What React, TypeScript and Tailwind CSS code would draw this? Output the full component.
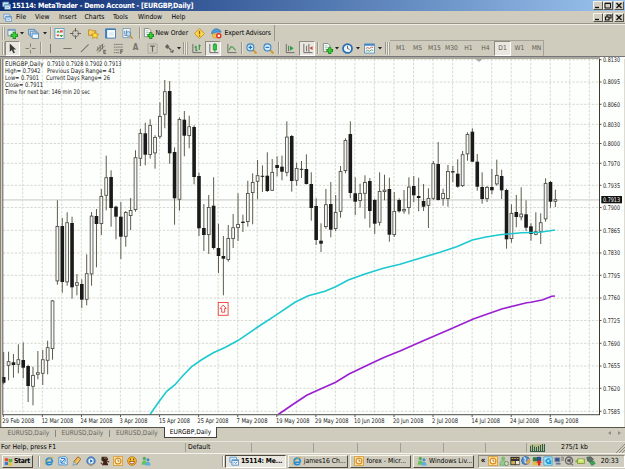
import type { ReactNode } from "react";
import clsx from "clsx";

// [high, body top, body bottom, low, filled]
type Candle = [number, number, number, number, 0 | 1];

const CANDLES: Candle[] = [
  [352, 377, 382.7, 384.3, 1], [351.7, 361.3, 365.7, 380.3, 0], [354, 362.3, 365, 377.7, 1],
  [344.3, 359.3, 364.7, 373.3, 0], [342.3, 360, 367.7, 378.3, 1], [364.7, 366, 386, 402, 1],
  [366.7, 375, 386.7, 405.3, 0], [351, 372.3, 374.7, 379.3, 0], [350, 359.3, 373.7, 385, 0],
  [340.7, 347.3, 360.7, 374.3, 0], [300, 300.5, 349, 359.7, 0], [200.3, 226, 281.3, 284.7, 0],
  [218, 226, 282, 292.7, 1], [212.3, 222.3, 282.3, 285.7, 0], [216.7, 223, 287.3, 298.7, 1],
  [274, 282.3, 285.7, 295.3, 0], [279.3, 284, 299.7, 308, 1], [254.3, 273.3, 299.7, 305.3, 0],
  [212, 215.7, 274.3, 285.7, 0], [209, 216, 224, 267.3, 1], [189, 196, 224, 235, 0],
  [155.7, 177.3, 195.7, 210.3, 0], [170.3, 177, 208, 226.7, 1], [205.7, 206.7, 216.7, 239.3, 1],
  [202, 216.7, 236.7, 259, 1], [211, 212, 236.7, 246.7, 0], [198, 210, 216, 230, 0],
  [150.3, 157.3, 210, 211.7, 0], [128.7, 133, 158.7, 166, 0], [122.7, 133.3, 154.7, 165.3, 1],
  [119.3, 125, 155, 158.7, 0], [135.3, 137, 153.3, 168.7, 0], [102.3, 116, 136.7, 138.7, 0],
  [80, 91.3, 114.7, 128.3, 0], [81, 91, 153.3, 163.7, 1], [147.3, 152, 198.3, 224.7, 1],
  [117.3, 119, 199.7, 210.7, 0], [111, 119.7, 135.7, 156.3, 1], [115.7, 126.3, 136, 148.3, 0],
  [125.3, 127, 177, 184.3, 1], [172.7, 176, 228.3, 236, 1], [204, 228, 235, 251, 1],
  [195, 207, 235, 254, 0], [177.3, 205.7, 248, 249.5, 1], [223.7, 248, 256, 273, 1],
  [236, 256, 258.7, 295.3, 1], [225, 238, 260, 261.7, 0], [214, 227.3, 239, 248, 0],
  [193.3, 224, 228, 241, 0], [214.7, 221.7, 223, 232, 1], [180.7, 193, 222, 226.7, 0],
  [173.3, 182, 193, 224.3, 0], [160, 175.3, 181.7, 199.3, 0], [165.3, 175.8, 176.8, 192, 1],
  [152.3, 175.7, 191, 192, 1], [159, 172, 190.7, 191, 0], [156.3, 165, 168, 176.3, 1],
  [155.7, 166.7, 171.7, 180.3, 1], [121.3, 136.7, 172.7, 176.3, 0], [135, 136, 181, 191.7, 1],
  [162.7, 168, 180.7, 185.7, 0], [161, 168.8, 169.8, 178, 1], [154.3, 169, 184, 184.5, 1],
  [172.3, 184, 208, 220.7, 1], [198.3, 206, 240, 245, 1], [223.3, 240.7, 243.7, 252, 1],
  [189, 204.3, 227, 228.7, 0], [182, 204, 229.7, 237.3, 1], [195, 212, 229, 231, 0],
  [166, 171, 211.7, 217.7, 0], [138.3, 140, 171, 173.3, 0], [121.3, 134, 193, 198.3, 1],
  [177.3, 193.3, 201.7, 215, 1], [183.7, 193, 201, 207.7, 0], [175.3, 182, 193.7, 218.7, 0],
  [178, 181, 211, 227.7, 1], [198.7, 200, 223.7, 234, 1], [172.3, 191, 222.7, 225.7, 0],
  [174.7, 189.7, 192, 200.3, 0], [177.7, 189, 234.7, 241.7, 1], [192, 211, 235, 237, 0],
  [198.3, 200, 211.3, 212.7, 1], [190, 209, 211.3, 213.7, 0], [177.3, 186.7, 208, 214.3, 0],
  [176, 186, 195.3, 202.3, 1], [177.7, 196, 198, 211.3, 1], [184, 201, 206.7, 211, 1],
  [188.3, 198, 205.7, 228, 0], [161, 163.3, 198.7, 200, 0], [142, 164, 200, 200.5, 1],
  [188.7, 193, 199, 205.7, 0], [165, 171, 199, 206.7, 0], [166, 171.2, 172.4, 182.3, 1],
  [159.3, 173.7, 186.7, 187.7, 1], [151, 154.3, 186, 187, 0], [132.3, 134, 154.3, 160.7, 0],
  [128.3, 131.7, 161.7, 162, 1], [154, 161.7, 186.7, 190.7, 1], [172.3, 187, 199, 203.7, 1],
  [186, 187, 199, 202, 0], [169, 187, 190.3, 194.3, 1], [159.7, 175, 184.3, 185.7, 0],
  [169.7, 176, 190.3, 199, 1], [188.7, 190, 239.3, 248.7, 1], [204.3, 213, 239, 242.7, 0],
  [195, 212, 217, 227.3, 1], [187.3, 213.7, 217.3, 220.3, 0], [200.3, 214.3, 227.7, 231, 1],
  [223.3, 226.3, 234, 240.7, 1], [212.3, 231.3, 234.7, 235.3, 0], [213.3, 222.3, 231.7, 244, 0],
  [178.3, 183, 219.3, 221.7, 0], [181, 182, 201.7, 207.7, 1], [189.7, 199.3, 201.7, 207, 0],
];

const PRICES: [string, number][] = [
  ["0.8130", 59.7], ["0.8095", 82], ["0.8060", 104.3], ["0.8030", 124.3], ["0.8000", 143.5],
  ["0.7970", 163.3], ["0.7935", 185.3], ["0.7900", 207.5], ["0.7865", 230.3], ["0.7830", 253],
  ["0.7795", 275.3], ["0.7760", 298], ["0.7725", 320.5], ["0.7690", 343.3], ["0.7655", 366],
  ["0.7620", 388.3], ["0.7585", 411.3],
];

const DATES: [string, number, number][] = [
  ["29 Feb 2008", 2.3, 32], ["12 Mar 2008", 41.7, 31.5], ["24 Mar 2008", 80.5, 32],
  ["3 Apr 2008", 119.5, 28], ["15 Apr 2008", 159, 31], ["25 Apr 2008", 197.5, 31],
  ["7 May 2008", 236.5, 31], ["19 May 2008", 276, 33.5], ["29 May 2008", 315, 33.5],
  ["10 Jun 2008", 354, 30.5], ["20 Jun 2008", 393, 30.5], ["2 Jul 2008", 432, 26],
  ["14 Jul 2008", 471.5, 28.5], ["24 Jul 2008", 510, 29], ["5 Aug 2008", 549, 29.5],
];

const NOTES: [string, number, number, number][] = [
  ["EURGBP,Daily", 5, 65.8, 38.5], ["0.7910 0.7928 0.7902 0.7913", 47, 65.8, 74.5],
  ["High= 0.7942", 5, 72.6, 35.5], ["Previous Days Range= 41", 47, 72.6, 68],
  ["Low= 0.7901", 5, 79.8, 34], ["Current Days Range= 26", 46, 79.8, 64],
  ["Close= 0.7911", 5, 87.3, 38], ["Time for next bar: 146 min 20 sec", 5, 94.4, 85],
];

const FAST_MA =
  "150,414.5 158,403 166.7,391.3 175,384.7 183,375.5 191.7,366.7 202,359.5 213.3,352.7 226,347 238.3,340.3 257,327.5 276.7,314.7 295,302.3 308.3,295.7 325,291.3 335.7,286.7 348.3,280 365,274 383.3,268.3 400,264.3 424,257 440,252.3 456.7,246.7 472.3,240 486,237 500,234.7 521.7,232.7 540,232.3 555,230";
const SLOW_MA =
  "277.5,415 292,405 306.7,395.3 321,388.7 335.7,382.3 349,374 365.7,366 383.3,357.7 400,351 423.3,340.7 450,329.3 473.3,319 486.7,314.3 501.7,309 526.7,302.7 531,302.3 543,299.7 551.7,296.3 555,296";

function Chart() {
  return (
    <svg
      viewBox="0 59 625 368"
      className="block h-[368px] w-[625px] shrink-0 overflow-visible bg-[#fdfffc] font-['DejaVu_Sans_Condensed','DejaVu_Sans',sans-serif] text-[6.4px]"
    >
      <g stroke="#d5d4cd" strokeWidth="0.9" strokeDasharray="2.4 1.5">
        {PRICES.map(([p, y]) => (
          <path key={p} d={`M3 ${y}H599`} />
        ))}
        {Array.from({ length: 30 }, (_, i) => (
          <path key={i} d={`M${22.7 + i * 19.54} 59V414`} />
        ))}
      </g>
      <path d="M3 199.9H599" stroke="#dededb" strokeWidth="1.6" />
      <path d="M475.5 59h7l-3.5 3z" fill="#aaa" />
      {CANDLES.map(([high, top, bottom, low, filled], i) => {
        const x = 3.7 + i * 4.882;
        return (
          <g key={i}>
            <path d={`M${x} ${high}V${low}`} stroke="#5f5b4c" strokeWidth="1" />
            <rect
              x={x - (filled ? 1.8 : 1.4)}
              y={filled ? top : top + 0.4}
              width={filled ? 3.6 : 2.8}
              height={filled ? bottom - top : bottom - top - 0.8}
              fill={filled ? "#1a1a1a" : "#f8f9f6"}
              stroke={filled ? "none" : "#4c4a42"}
              strokeWidth="0.85"
            />
          </g>
        );
      })}
      <polyline points={FAST_MA} fill="none" stroke="#1cc9d0" strokeWidth="1.6" />
      <polyline points={SLOW_MA} fill="none" stroke="#9a1fd0" strokeWidth="1.6" />
      <rect x="218.3" y="302.5" width="9.8" height="12.8" fill="#fff" stroke="#f0504a" strokeWidth="1" />
      <path d="M223.2 305l3 3.5h-1.5v3.7h-3v-3.7h-1.5z" fill="#fff" stroke="#e8403a" strokeWidth="0.9" />
      <path d="M0.7 59V427" stroke="#8b846c" strokeWidth="1.4" />
      <path d="M2.8 59V414.8" stroke="#55555a" strokeWidth="1" />
      <path d="M1.5 59V427" stroke="#d9d6cb" strokeWidth="0.7" />
      <path d="M2.5 414.7H600" stroke="#6e6e6a" strokeWidth="1.2" />
      <path d="M599.5 59V415" stroke="#3c3a2c" strokeWidth="1" />
      <path d="M624.5 59V427" stroke="#dedbd2" strokeWidth="1" />
      <g stroke="#444" strokeWidth="0.9">
        {Array.from({ length: 15 }, (_, i) => (
          <path key={i} d={`M${3.3 + i * 39.07} 415v2`} />
        ))}
        {PRICES.map(([p, y]) => (
          <path key={p} d={`M600 ${y}h1.5`} />
        ))}
      </g>
      <g fill="#222">
        {PRICES.map(([p, y]) => (
          <text key={p} x="603" y={y + 2.4} textLength="17" lengthAdjust="spacingAndGlyphs">{p}</text>
        ))}
        {DATES.map(([d, x, w]) => (
          <text key={d} x={x} y="422.9" textLength={w} lengthAdjust="spacingAndGlyphs">{d}</text>
        ))}
        {NOTES.map(([t, x, y, w]) => (
          <text key={t} x={x} y={y} textLength={w} lengthAdjust="spacingAndGlyphs">{t}</text>
        ))}
      </g>
      <rect x="601.3" y="196" width="20.7" height="7.3" fill="#111" />
      <text x="603" y="202" fill="#fff" textLength="17" lengthAdjust="spacingAndGlyphs">0.7913</text>
    </svg>
  );
}

const ICONS: Record<string, ReactNode> = {
  app: (
    <>
      <path d="M1 1.5h8v6H1z" fill="#d9ecfa" stroke="#5d93c4" />
      <path d="M3.5 4.5h8v6.5h-8z" fill="#eef7fd" stroke="#4a86bb" />
      <path d="M4 5.5h7M5 9l1.5-1.5L8 9l2-2" stroke="#3b78b4" fill="none" />
    </>
  ),
  newChart: (
    <>
      <path d="M1 1.5h8v7H1z" fill="#e9f2f4" stroke="#6b8ea6" />
      <path d="M1 2.5h8" stroke="#5b95c6" />
      <path d="M8 4v8M4 8h8" stroke="#1c8a1c" strokeWidth="3.6" />
      <path d="M8 5v6M5 8h6" stroke="#3dd13d" strokeWidth="2" />
    </>
  ),
  profiles: (
    <>
      <path d="M.5 1.5h7v6h-7z" fill="#c3dcf2" stroke="#5685b4" />
      <path d="M2.5 3.5h7v6h-7z" fill="#d4e7f7" stroke="#5685b4" />
      <path d="M4.5 5.5h7v6h-7z" fill="#eff7fd" stroke="#5685b4" />
      <path d="M5 6.5h6" stroke="#5795d4" />
    </>
  ),
  market: (
    <>
      <path d="M1 .5h10v11H1z" fill="#f5f7f5" stroke="#5c9ac4" />
      <path d="M2.5 5l2-2.500 2 2.500zM6 7.500l2 2.500 2-2.500z" fill="#27a527" />
      <path d="M6.500 2.500h3v2.500h-3zM3 7h2.500v2H3z" fill="#e25345" />
    </>
  ),
  target: (
    <>
      <circle cx="6" cy="6" r="3.5" fill="none" stroke="#77756c" />
      <path d="M6 0v4M6 8v4M0 6h4M8 6h4" stroke="#66645b" strokeWidth="1.1" />
    </>
  ),
  navigator: (
    <>
      <path d="M.5 2h3l1 1h4v5h-8z" fill="#f6d061" stroke="#bb8c28" />
      <path d="M7.5 4l1.300 2.500 3 .3-2.200 1.900.6 2.800-2.700-1.400-2.500 1.400.6-2.800L3.500 6.800l3-.3z" fill="#fbe03c" stroke="#c38712" strokeWidth=".8" />
    </>
  ),
  terminal: (
    <>
      <path d="M.5 1h11v10H.5z" fill="#f7fafc" stroke="#417bb2" />
      <path d="M1 1.5h10M1.5 2v9" stroke="#3a7ebf" strokeWidth="1.6" />
      <path d="M4.5 5.5h5M4.5 7.5h5" stroke="#b9cfdf" strokeWidth=".7" />
    </>
  ),
  tester: (
    <>
      <path d="M1 .5h8v10H1z" fill="#eff5f8" stroke="#7a9ab5" />
      <path d="M3 3v4M5 2.5v4M2.5 8h5" stroke="#4d86b4" />
      <circle cx="7" cy="6.5" r="2.5" fill="#b8daf0" fillOpacity=".8" stroke="#5e87a8" />
      <path d="M9 8.5l2.5 3" stroke="#c8922d" strokeWidth="1.6" />
    </>
  ),
  order: (
    <>
      <path d="M1.5.5h5l2 2v7h-7z" fill="#f8f9f7" stroke="#7c8b86" />
      <path d="M3 3h3M3 5h4M3 7h3" stroke="#9aa" strokeWidth=".7" />
      <path d="M8.500 4.500v7.500M4.800 8.200h7.200" stroke="#168a1a" strokeWidth="3.4" />
      <path d="M8.500 5.500v5.500M5.800 8.200h5.200" stroke="#3ccc3c" strokeWidth="1.8" />
    </>
  ),
  alert: (
    <>
      <path d="M6 .5L11.5 6 6 11.5.5 6z" fill="#f9d64a" stroke="#c4942a" />
      <path d="M6 3v3.800M6 8v1.300" stroke="#a45c0e" strokeWidth="1.4" />
    </>
  ),
  expert: (
    <>
      <path d="M1.5 6.5h7.5v1.5q0 3-3.8 3T1.5 8z" fill="#f3c550" stroke="#bf8a25" strokeWidth=".6" />
      <path d="M.5 6Q1.5 1 6 .8 10.5 1.5 11 4.5q-5-.5-10.5 1.5z" fill="#4d9edb" stroke="#2b6fa9" strokeWidth=".7" />
      <circle cx="8.5" cy="8.5" r="3" fill="#e0331f" />
      <path d="M7.3 7.3h2.4v2.4H7.3z" fill="#fff" />
    </>
  ),
  pointer: <path d="M3 .5v9l2.300-2 1.600 3.800 1.700-.8L7 7h3z" fill="#3d3b38" />,
  cross: <path d="M6 .5v4M6 7.5v4M.5 6h4M7.5 6h4" stroke="#85827a" strokeWidth="1.1" />,
  vline: <path d="M6 1v10" stroke="#77746c" strokeWidth="1.1" />,
  hline: <path d="M1.500 6h9" stroke="#77746c" strokeWidth="1.1" />,
  trend: <path d="M2 10l8.500-8.500" stroke="#77746c" strokeWidth="1.1" />,
  channel: (
    <>
      <path d="M.5 8.500L8 1M2 10.500L9.500 3M2 4v4M4.500 2v7M7 1v6" stroke="#65625b" strokeWidth=".9" />
      <path d="M8.500 7.500v4M8.500 8h2.500M8.500 9.700h2M8.500 11.500h2.500" stroke="#555" strokeWidth=".9" />
    </>
  ),
  fibo: (
    <>
      <path d="M1 1.500h10M1 4.500h10M1 7.500h6M1 10.500h6" stroke="#77746c" strokeDasharray="1.8 .5" />
      <path d="M8.500 7v5M8.500 7.500H11M8.500 9.500h2" stroke="#555" />
    </>
  ),
  label: (
    <>
      <path d="M1 1h10v10H1z" fill="none" stroke="#8b887f" strokeWidth=".8" strokeDasharray="1.2 .7" />
      <path d="M3.500 3.500h5M6 3.500V9.500" stroke="#66635c" strokeWidth="1.3" />
    </>
  ),
  arrows: (
    <>
      <path d="M3.500 1L6 4 3.500 6.500 1 4z" fill="#66635c" />
      <path d="M5 5l3 3M7 9.500l2.500.5.500-2.500" fill="none" stroke="#555" strokeWidth="1.3" />
    </>
  ),
  bars: (
    <>
      <path d="M2 1v9.500h9.500" fill="none" stroke="#666" />
      <path d="M5.500 3v6M4 4.500h1.500M5.500 8H7M9 1.500v6M9 3h1.500" stroke="#1d8f33" strokeWidth="1.1" />
    </>
  ),
  candles: (
    <>
      <path d="M2 1v9.500h9.500" fill="none" stroke="#666" />
      <path d="M7.500 0v10" stroke="#1d8f33" />
      <path d="M5.800 1.500h3.400v6H5.800z" fill="#2fcb45" stroke="#168a2a" strokeWidth=".8" />
    </>
  ),
  line: (
    <>
      <path d="M2 1v9.500h9.500" fill="none" stroke="#666" />
      <path d="M3 8l2.500-4 2 .5 3 3.500" fill="none" stroke="#3d9c47" strokeWidth="1.1" />
    </>
  ),
  zoomIn: (
    <>
      <path d="M7.500 7.500l4 4" stroke="#cf9d31" strokeWidth="2.2" />
      <circle cx="4.8" cy="4.8" r="3.8" fill="#d5ecfb" stroke="#3d86c6" strokeWidth="1.2" />
      <path d="M4.800 2.800v4M2.800 4.800h4" stroke="#2470b0" strokeWidth="1.2" />
    </>
  ),
  zoomOut: (
    <>
      <path d="M7.500 7.500l4 4" stroke="#cf9d31" strokeWidth="2.2" />
      <circle cx="4.8" cy="4.8" r="3.8" fill="#d5ecfb" stroke="#3d86c6" strokeWidth="1.2" />
      <path d="M2.800 4.800h4" stroke="#2470b0" strokeWidth="1.2" />
    </>
  ),
  scroll: (
    <>
      <path d="M2.500 1v9.500h9M5 3v6" fill="none" stroke="#666" />
      <path d="M6.500 3v5.500L10.500 5.700z" fill="#22a53a" />
    </>
  ),
  shift: (
    <>
      <path d="M2 1v9.500h9.500M5 3v6M7.500 1v9" fill="none" stroke="#666" />
      <path d="M11.500 3.500v4L8 5.500z" fill="#d4472c" />
    </>
  ),
  clock: (
    <>
      <circle cx="6" cy="6" r="4.9" fill="#eaf5fc" stroke="#2a6db5" strokeWidth="1.9" />
      <path d="M6 3v3l2.200 1" fill="none" stroke="#555" />
    </>
  ),
  template: (
    <>
      <path d="M.5 1h11v10H.5z" fill="#f4f8fb" stroke="#5c8fbd" />
      <path d="M.5 2h11" stroke="#4487c7" strokeWidth="2" />
      <path d="M2 6l2-1 2 1 2-1.500 2 .5" fill="none" stroke="#c7583e" />
      <path d="M2 9l2-1 2 1 2-1.500 2 .5" fill="none" stroke="#4a9a55" />
    </>
  ),
  windows: (
    <>
      <path d="M1 2q2.500-1.500 4.500 0v4q-2-1.500-4.500 0z" fill="#e5502c" />
      <path d="M6.200 2.400q2.300 1.300 4.800 0v4q-2.500 1.300-4.800 0z" fill="#5dae3a" />
      <path d="M1 7q2.500-1.500 4.500 0v4q-2-1.500-4.500 0z" fill="#3c76ce" />
      <path d="M6.200 7.200q2.300 1.300 4.800 0v4q-2.500 1.300-4.800 0z" fill="#f2bf2c" />
    </>
  ),
  ie: (
    <>
      <path d="M10 7.500H3.800M10 7.500Q10.200 2.500 6.300 2.500 2.500 2.800 2.500 6.700 2.800 10.500 6.300 10.500 8.700 10.500 9.700 8.800" fill="none" stroke="#218cd6" strokeWidth="2" />
      <path d="M1.500 11Q-.5 8 6 3.500 10.500.5 11.500 2" fill="none" stroke="#e4a92a" />
    </>
  ),
  outlookExpress: (
    <>
      <path d="M1 1.500l8-.8 2 2v8H1z" fill="#e2f1fb" stroke="#3c82c2" />
      <path d="M3.500 3h5v4M8.500 8.500h-5v-4M4 8l4-4" fill="none" stroke="#2c7ccb" strokeWidth="1.2" />
    </>
  ),
  pencil: (
    <>
      <path d="M2 7l5-6 3.500 2.500-5 7z" fill="#efb54a" stroke="#94601b" />
      <path d="M1 11l2-4 3 3z" fill="#e0dcd0" stroke="#5a87ae" strokeWidth=".8" />
      <path d="M5 8l4-4.500" stroke="#fbe09a" strokeWidth="1.2" />
    </>
  ),
  player: (
    <>
      <circle cx="6" cy="6" r="5" fill="#4187cf" stroke="#4e78b8" strokeWidth="1.2" />
      <circle cx="6" cy="6" r="3.2" fill="#e9f4fb" />
      <path d="M2 9.500q4 3 8 0" fill="none" stroke="#e2a24b" />
      <path d="M5 4l3.200 2L5 8z" fill="#1d5eab" />
    </>
  ),
  figure: (
    <>
      <path d="M2 1h6l2 3-2 2 2 5H3l1-4-2.500-2z" fill="#38281c" />
      <path d="M5 1.500h3v2H5z" fill="#91512c" />
      <path d="M1 8l3 3M8 6l3 1" stroke="#8e231a" strokeWidth="1.4" />
    </>
  ),
  outlook: (
    <>
      <path d="M.5.5h11v11H.5z" fill="#fbe3a3" stroke="#d99428" />
      <circle cx="6" cy="6" r="3.5" fill="#fff6da" stroke="#d98d20" strokeWidth="1.4" />
      <path d="M6 4v2.200h1.800" fill="none" stroke="#a4660e" />
    </>
  ),
  smiley: (
    <>
      <circle cx="6" cy="6" r="5.2" fill="#fac42c" stroke="#b8731b" />
      <path d="M3 6.500h6q0 3-3 3t-3-3z" fill="#fff" stroke="#a33a18" />
      <path d="M4 3v2M8 3v2" stroke="#5a3a10" strokeWidth="1.2" />
    </>
  ),
  people: (
    <>
      <circle cx="4" cy="3" r="2" fill="#55ae55" />
      <path d="M.8 10.500Q1 5.500 4 5.500t3.200 5z" fill="#66c25c" />
      <circle cx="8.3" cy="4.5" r="1.9" fill="#3d91cd" />
      <path d="M5.200 11.500Q5.500 7 8.300 7t3.200 4.500z" fill="#5caee2" />
    </>
  ),
  buddy: (
    <>
      <circle cx="5" cy="3" r="2.3" fill="#7bbd6d" />
      <path d="M1 11q0-5.500 4-5.500T9 11z" fill="#9ccb90" stroke="#5a9a55" strokeWidth=".6" />
      <circle cx="9" cy="9" r="2.5" fill="#c9d9c4" stroke="#5f8f5b" />
    </>
  ),
  card: (
    <>
      <path d="M.5 1h11v10H.5z" fill="#333" />
      <path d="M1.500 6H6v4H1.500z" fill="#d4a851" />
      <path d="M2 3h8" stroke="#e9b44a" strokeDasharray="2 1" />
      <path d="M7 6h4v4H7z" fill="#ece9dc" />
    </>
  ),
  globe: (
    <>
      <circle cx="5.5" cy="5.5" r="4.8" fill="#538fce" stroke="#32639f" />
      <path d="M3 2q3 0 2 3T7 8" fill="none" stroke="#d7e7f2" strokeWidth="1.5" />
      <path d="M6 8l3-5 2.500 2-3 5.500z" fill="#e6a234" />
    </>
  ),
  shield: (
    <>
      <path d="M1 1.500h6v5H1z" fill="#2f7a35" />
      <path d="M6 1h5v5H6z" fill="#264fa5" />
      <path d="M1 7h5v4H1z" fill="#e9bf32" />
      <path d="M8.500 4.500L12 8h-2v3.500H7V8H5z" fill="#dc2920" />
    </>
  ),
  quick: (
    <>
      <path d="M1 1h10v10H1z" fill="#bfe5f6" stroke="#33a6d9" />
      <path d="M9 3.500H5.500L3.500 6l2 2.500H9V6H7" fill="none" stroke="#149ad9" strokeWidth="1.9" />
    </>
  ),
  network: (
    <>
      <path d="M1 2h6v5H1zM2.500 8.500h5v1.500h-5z" fill="#36538d" stroke="#8c95a8" />
      <path d="M9 1q1.500 2 0 4.500M10.500.5q2 2.500 0 5.500" fill="none" stroke="#555" strokeWidth=".8" />
    </>
  ),
  speaker: (
    <>
      <circle cx="6" cy="5.5" r="4.3" fill="#ccc9bd" stroke="#66676b" strokeWidth="1.6" />
      <path d="M4 4h2l2-1.500v6L6 7H4z" fill="#555" />
      <path d="M8 9l3 2" stroke="#777" strokeWidth="1.5" />
    </>
  ),
  battery: (
    <>
      <path d="M3 3.500h8.500v5.500H3z" fill="#c9e36c" stroke="#81963a" />
      <path d="M.5 5h2.500v2.500H.5z" fill="#7fb043" />
      <path d="M5 5h4" stroke="#f6fbd6" strokeWidth="1.4" />
    </>
  ),
  plug: (
    <>
      <path d="M1 1.500l5-.5 3 3-3 3-4-1z" fill="#5f7168" stroke="#3c4a42" strokeWidth=".7" />
      <path d="M4 7l5-1 2 3-4 2.500z" fill="#39a84c" stroke="#24713a" strokeWidth=".7" />
    </>
  ),
};

function Icon({ name, className = "size-[11px]" }: { name: string; className?: string }) {
  return (
    <svg viewBox="0 0 12 12" fill="none" className={clsx("shrink-0", className)}>
      {ICONS[name]}
    </svg>
  );
}

function Caret() {
  return (
    <svg viewBox="0 0 4 3" className="h-[3px] w-[4px] shrink-0">
      <path d="M0 0h4L2 2.5z" fill="#222" />
    </svg>
  );
}

function Divider() {
  return <div className="h-[12px] w-[2px] shrink-0 border-l border-[#99968b] bg-[#e4e1d6]" />;
}

function Grip() {
  return <div className="h-[13px] w-[3px] shrink-0 border-x border-[#a5a297] bg-[#efede4]" />;
}

interface CellProps {
  w: string;
  icon?: string;
  pressed?: boolean;
  children?: ReactNode;
}

function Cell({ w, icon, pressed, children }: CellProps) {
  return (
    <div
      className={clsx(
        "flex h-[15px] shrink-0 items-center justify-center",
        w,
        pressed && "border border-[#8d8a80] border-r-white border-b-white bg-[#e9e7df]",
      )}
    >
      {icon && <Icon name={icon} />}
      {children}
    </div>
  );
}

function WindowButtons({ restore }: { restore?: boolean }) {
  const box =
    "flex h-[9px] w-[10px] items-center justify-center border border-[#f4f2ea] border-r-[#55534c] border-b-[#55534c] bg-[#d2cec0]";
  return (
    <div className="ml-auto flex items-center pr-[1px]">
      <div className={box}>
        <svg viewBox="0 0 8 7" className="h-[7px] w-[8px]"><path d="M1 5.5h4" stroke="#111" strokeWidth="1.3" /></svg>
      </div>
      <div className={box}>
        <svg viewBox="0 0 8 7" className="h-[7px] w-[8px]" fill="none" stroke="#111">
          {restore ? <path d="M3 2.5V1h4v3H5.5M1.5 3h3.500v3H1.5z" strokeWidth="1.1" /> : <path d="M1 1.200h5.500v4.800H1zM1 1.500h5.500" />}
        </svg>
      </div>
      <div className={clsx(box, "ml-[1px]")}>
        <svg viewBox="0 0 8 7" className="h-[7px] w-[8px]"><path d="M1.500 1l5 5M6.500 1l-5 5" stroke="#111" strokeWidth="1.3" /></svg>
      </div>
    </div>
  );
}

const MENU = [
  ["File", "w-[19px]"], ["View", "w-[24px]"], ["Insert", "w-[25.5px]"], ["Charts", "w-[28.5px]"],
  ["Tools", "w-[25px]"], ["Window", "w-[33.5px]"], ["Help", "w-[20px]"],
];

function StandardToolbar() {
  return (
    <div className="flex h-[16px] w-[275px] shrink-0 items-center border-r border-[#99968b] pl-[2px]">
      <Grip />
      <Cell w="w-[15px]" icon="newChart" />
      <Caret />
      <Cell w="w-[19px]" icon="profiles" />
      <Caret />
      <div className="w-[3px]" />
      <Divider />
      <Cell w="w-[15px]" icon="market" />
      <Cell w="w-[17.5px]" icon="target" />
      <Cell w="w-[17px]" icon="navigator" />
      <Cell w="w-[17px]" icon="terminal" />
      <Cell w="w-[18px]" icon="tester" />
      <div className="w-[2px]" />
      <Divider />
      <div className="flex w-[50px] items-center gap-[2px] pl-[2px]">
        <Icon name="order" />
        <span>New Order</span>
      </div>
      <Cell w="w-[18px]" icon="alert" />
      <div className="flex items-center gap-[3px] pl-[2px]">
        <Icon name="expert" />
        <span className="tracking-[-0.1px]">Expert Advisors</span>
      </div>
    </div>
  );
}

function ChartToolbar() {
  return (
    <div className="flex h-[16px] shrink-0 items-center pl-[2px]">
      <Grip />
      <Cell w="w-[15px]" icon="pointer" pressed />
      <Cell w="w-[20px]" icon="cross" />
      <Divider />
      <Cell w="w-[17px]" icon="vline" />
      <Cell w="w-[17px]" icon="hline" />
      <Cell w="w-[17px]" icon="trend" />
      <Cell w="w-[17px]" icon="channel" />
      <Cell w="w-[17px]" icon="fibo" />
      <Cell w="w-[17px]"><span className="text-[8px] font-bold text-[#77746c]">A</span></Cell>
      <Cell w="w-[17px]" icon="label" />
      <Cell w="w-[16px]" icon="arrows" />
      <Caret />
      <div className="w-[2px]" />
      <Divider />
      <Grip />
      <Cell w="w-[17px]" icon="bars" />
      <Cell w="w-[16px]" icon="candles" pressed />
      <Cell w="w-[20px]" icon="line" />
      <Divider />
      <Cell w="w-[16px]" icon="zoomIn" />
      <Cell w="w-[19px]" icon="zoomOut" />
      <Divider />
      <Cell w="w-[19px]" icon="scroll" />
      <Cell w="w-[16px]" icon="shift" pressed />
      <div className="w-[2px]" />
      <Divider />
      <Cell w="w-[16px]" icon="order" />
      <Caret />
      <Cell w="w-[17px]" icon="clock" />
      <Caret />
      <Cell w="w-[18px]" icon="template" />
      <Caret />
      <div className="w-[3px]" />
      <Divider />
      <Grip />
    </div>
  );
}

const PERIODS = ["M1", "M5", "M15", "M30", "H1", "H4", "D1", "W1", "MN"];

const QUICK = ["ie", "outlookExpress", "pencil", "player", "figure", "outlook", "smiley", "people"];
const TRAY = ["outlook", "buddy", "card", "globe", "shield", "quick", "network", "speaker", "battery", "plug"];

const TASKS = [
  { icon: "app", title: "15114: Me...", active: true },
  { icon: "ie", title: "james16 Ch..." },
  { icon: "outlook", title: "forex - Micr..." },
  { icon: "people", title: "Windows Liv..." },
];

function ChartTabs() {
  return (
    <div className="flex h-[14px] shrink-0 items-start text-[6.6px] text-[#66635a]">
      <div className="h-[11px] w-[2px] border-t border-[#55534a]" />
      {["a", "b", "c"].map((id) => (
        <div key={id} className="flex h-[11px] w-[54px] items-center justify-center border-t border-[#55534a]">
          <span
            className={clsx(
              "flex h-[7px] w-full items-center justify-center",
              id !== "c" && "border-r border-[#88857a]",
            )}
          >
            EURUSD,Daily
          </span>
        </div>
      ))}
      <div className="flex h-[11px] w-[53px] items-center justify-center border-r border-b border-l border-[#44423a] bg-white text-black">
        EURGBP,Daily
      </div>
      <div className="flex h-[11px] flex-1 items-center justify-end gap-[7px] border-t border-[#55534a] pr-[4px]">
        <svg viewBox="0 0 3 4" className="h-[4px] w-[3px]"><path d="M3 0v4L0 2z" fill="#908d82" /></svg>
        <svg viewBox="0 0 3 4" className="h-[4px] w-[3px]"><path d="M0 0v4l3-2z" fill="#908d82" /></svg>
      </div>
    </div>
  );
}

function StatusBar() {
  const pane = "h-[9px] shrink-0 border-l border-[#a19e93]";
  return (
    <div className="flex h-[12px] shrink-0 items-center border-t border-[#e8e5dc]">
      <div className="w-[185px] pl-[1px]">For Help, press F1</div>
      <div className={clsx(pane, "flex w-[66px] items-center pl-[2px]")}>Default</div>
      <div className={clsx(pane, "w-[62px]")} />
      <div className={clsx(pane, "w-[44px]")} />
      <div className={clsx(pane, "w-[43px]")} />
      <div className={clsx(pane, "w-[43px]")} />
      <div className={clsx(pane, "w-[42px]")} />
      <div className={clsx(pane, "w-[41px]")} />
      <div className={clsx(pane, "flex flex-1 items-center pl-[3px]")}>
        <svg viewBox="0 0 15 8" className="h-[8px] w-[15px]">
          <path d="M0 0h15v8H0z" fill="#b9bd86" />
          <path d="M.5 2v6M2.500 1v7M4.500 2.500v5.500M6.500 3v5M8.500 2v6M10.500 1v7M12.500 0v8M14.500 0v8" stroke="#2c5a55" />
          <path d="M0 7.500h15" stroke="#35614c" />
        </svg>
        <span className="ml-[16px]">275/1 kb</span>
        <svg viewBox="0 0 9 9" className="mt-[2px] ml-auto h-[9px] w-[9px]">
          <path d="M0 9l9-9M3 9l6-6M6 9l3-3" stroke="#8e8b80" />
        </svg>
      </div>
    </div>
  );
}

function Taskbar() {
  return (
    <div className="flex h-[16px] shrink-0 items-center border-t border-[#f4f2ea] pb-[1px] pl-[2px]">
      <div className="flex h-[13px] w-[31px] items-center gap-[1px] border border-[#f6f4ee] border-r-[#4c4a42] border-b-[#4c4a42] pl-px text-[6.8px] font-bold tracking-[-0.3px]">
        <Icon name="windows" className="size-[9px]" />
        Start
      </div>
      <div className="ml-[5px] h-[11px] w-[2px] border-l border-[#99968b] bg-white" />
      <div className="ml-[2px] flex w-[180px]">
        {QUICK.map((name) => (
          <div key={name} className="flex w-[13.9px] justify-center">
            <Icon name={name} className="size-[10px]" />
          </div>
        ))}
      </div>
      <div className="h-[11px] w-[2px] border-l border-[#99968b] bg-white" />
      <div className="ml-[1px] flex gap-[2px]">
        {TASKS.map(({ icon, title, active }) => (
          <div
            key={title}
            className={clsx(
              "flex h-[13px] w-[60.7px] items-center gap-[2px] overflow-hidden border pl-[3px] whitespace-nowrap",
              active
                ? "border-[#4c4a42] border-r-white border-b-white bg-[#e8e6de] font-bold tracking-[-0.15px]"
                : "border-[#f6f4ee] border-r-[#4c4a42] border-b-[#4c4a42]",
            )}
          >
            <Icon name={icon} className="size-[10px]" />
            {title}
          </div>
        ))}
      </div>
      <div className="ml-[4px] flex h-[13px] flex-1 items-center border border-[#8d8a80] border-r-white border-b-white pl-[2px]">
        <span className="w-[7px] text-[8px] leading-none font-bold">«</span>
        {TRAY.map((name) => (
          <div key={name} className="flex w-[10.9px] justify-center">
            <Icon name={name} className="size-[10px]" />
          </div>
        ))}
        <span className="ml-[4px] text-[7px]">20:33</span>
      </div>
    </div>
  );
}

export default function App() {
  return (
    <div className="flex h-[469px] w-[625px] flex-col overflow-hidden bg-[#cfccbe] font-['DejaVu_Sans_Condensed','DejaVu_Sans',sans-serif] text-[6.8px] leading-none whitespace-nowrap text-black">
      <div className="flex h-[11px] shrink-0 items-center gap-[1px] bg-linear-to-r from-[#0c2a70] to-[#9cc4ee] pl-[2px] text-[7.2px] font-bold text-white">
        <Icon name="app" className="size-[9px]" />
        <span className="tracking-[-0.2px]">15114: MetaTrader - Demo Account - [EURGBP,Daily]</span>
        <WindowButtons />
      </div>
      <div className="flex h-[13px] shrink-0 items-center border-b border-[#99968b] pl-[3px]">
        <Icon name="app" className="size-[9px]" />
        <div className="ml-[4px] flex">
          {MENU.map(([label, w]) => (
            <span key={label} className={w}>{label}</span>
          ))}
        </div>
        <WindowButtons restore />
      </div>
      <div className="flex h-[16px] shrink-0 border-t border-[#efede4]">
        <StandardToolbar />
      </div>
      <div className="flex h-[16px] shrink-0">
        <ChartToolbar />
        <div className="flex w-[154px] items-center border-t border-r border-[#a5a297] pl-[2px] text-[6.7px] text-[#5d5a52]">
          {PERIODS.map((p) => (
            <Cell key={p} w="w-[17px]" pressed={p === "D1"}>{p}</Cell>
          ))}
        </div>
      </div>
      <div className="flex h-[3px] shrink-0">
        <div className="w-[600px] border-t border-[#77747a] bg-[#a9a69e]" />
        <div className="flex-1 border-t border-[#77747a] bg-[#fdfffc]" />
      </div>
      <Chart />
      <ChartTabs />
      <StatusBar />
      <Taskbar />
    </div>
  );
}
